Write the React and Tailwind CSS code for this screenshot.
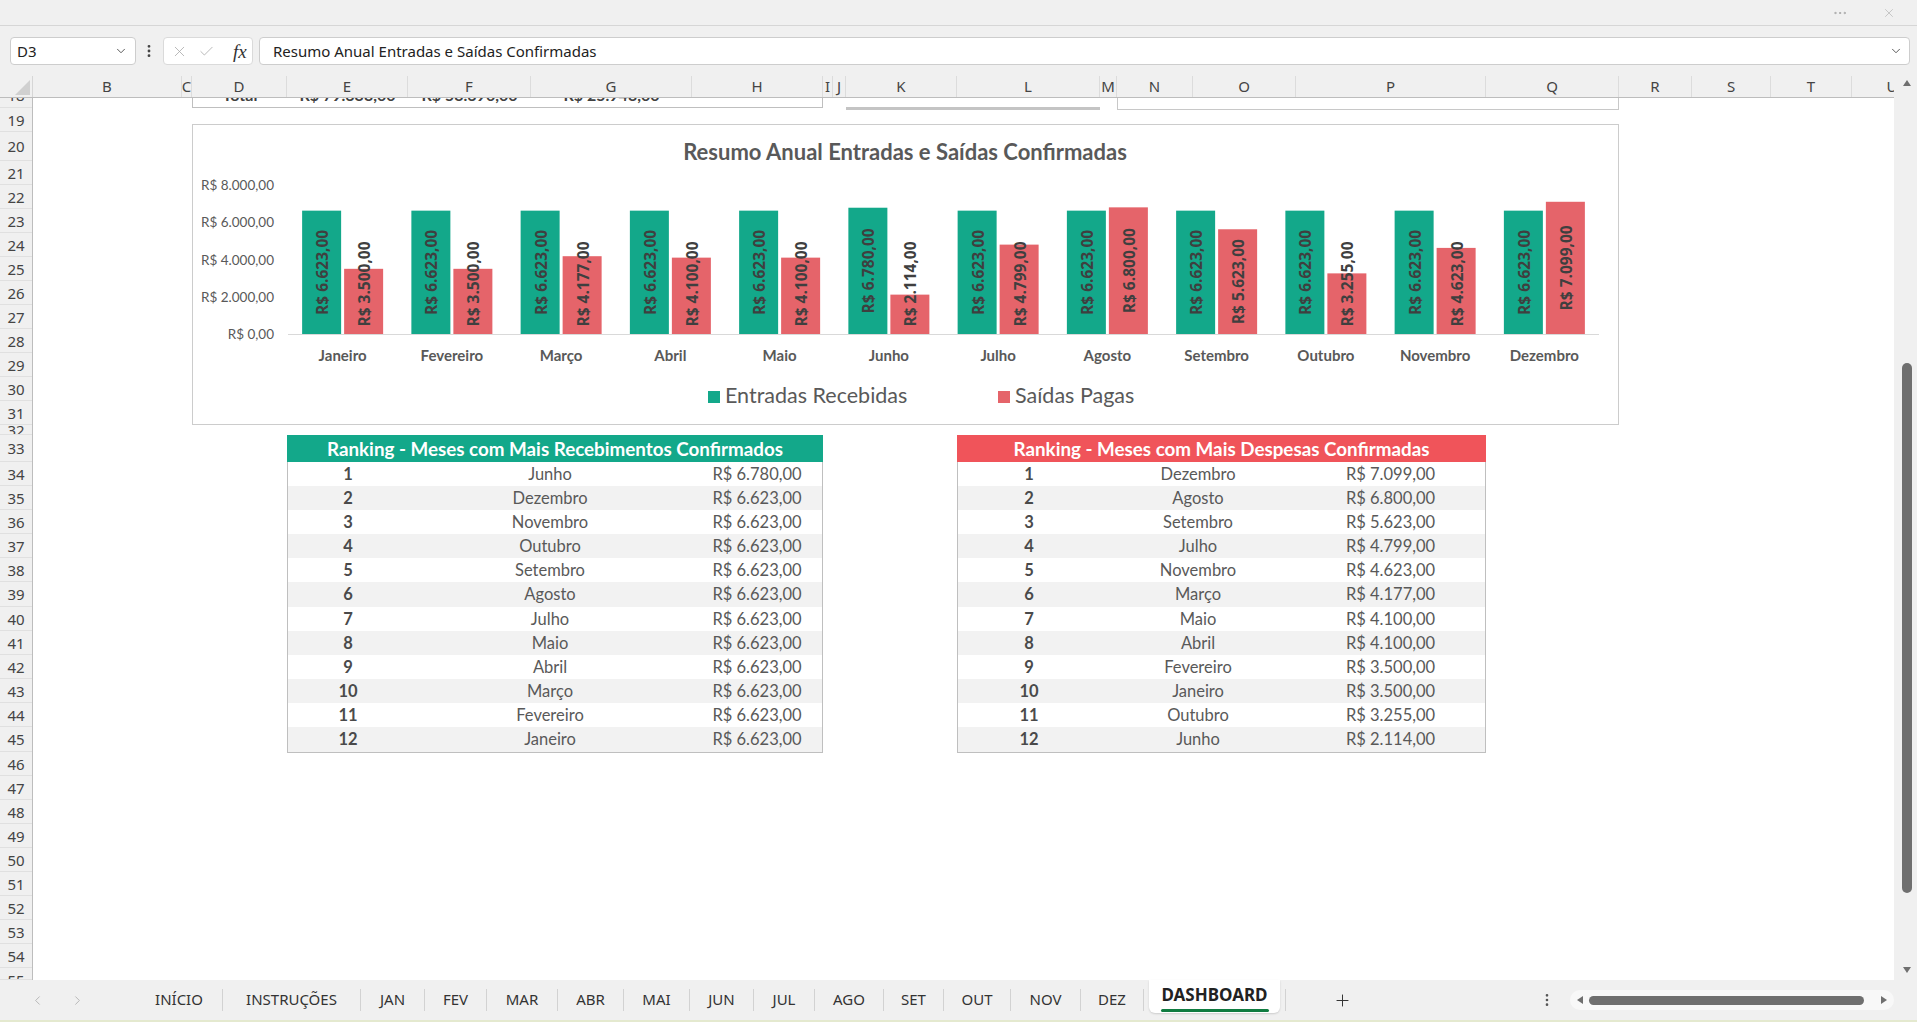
import React from "react";
import { ChevronDown, ChevronLeft, ChevronRight, EllipsisVertical, Ellipsis, X, Check, Plus } from "lucide-react";

const months = ["Janeiro", "Fevereiro", "Março", "Abril", "Maio", "Junho", "Julho", "Agosto", "Setembro", "Outubro", "Novembro", "Dezembro"];
const entradas = [6623, 6623, 6623, 6623, 6623, 6780, 6623, 6623, 6623, 6623, 6623, 6623];
const saidas = [3500, 3500, 4177, 4100, 4100, 2114, 4799, 6800, 5623, 3255, 4623, 7099];

const brl = (v) => "R$ " + String(v).replace(/\B(?=(\d{3})+(?!\d))/g, ".") + ",00";

const rankEntradas = [
    ["Junho", 6780], ["Dezembro", 6623], ["Novembro", 6623], ["Outubro", 6623],
    ["Setembro", 6623], ["Agosto", 6623], ["Julho", 6623], ["Maio", 6623],
    ["Abril", 6623], ["Março", 6623], ["Fevereiro", 6623], ["Janeiro", 6623],
];
const rankSaidas = [
    ["Dezembro", 7099], ["Agosto", 6800], ["Setembro", 5623], ["Julho", 4799],
    ["Novembro", 4623], ["Março", 4177], ["Maio", 4100], ["Abril", 4100],
    ["Fevereiro", 3500], ["Janeiro", 3500], ["Outubro", 3255], ["Junho", 2114],
];

const cols = [
    { l: "B", w: "w-[149px]" }, { l: "C", w: "w-[10px]" }, { l: "D", w: "w-[95px]" },
    { l: "E", w: "w-[121px]" }, { l: "F", w: "w-[123px]" }, { l: "G", w: "w-[161px]" },
    { l: "H", w: "w-[131px]" }, { l: "I", w: "w-[10px]" }, { l: "J", w: "w-[13px]" },
    { l: "K", w: "w-[111px]" }, { l: "L", w: "w-[143px]" }, { l: "M", w: "w-[17px]" },
    { l: "N", w: "w-[76px]" }, { l: "O", w: "w-[103px]" }, { l: "P", w: "w-[190px]" },
    { l: "Q", w: "w-[133px]" }, { l: "R", w: "w-[73px]" }, { l: "S", w: "w-[79px]" },
    { l: "T", w: "w-[81px]" }, { l: "U", w: "w-[81px]" },
];

// row number -> height class, and how a clipped label sits
const rowList = (() => {
    const out = [[18, "h-[10px]", "items-end"], [19, "h-[24px]"], [20, "h-[29px]"]];
    for (let n = 21; n <= 31; n++) out.push([n, "h-[24px]"]);
    out.push([32, "h-[10px]"]);
    out.push([33, "h-[27px]"]);
    for (let n = 34; n <= 45; n++) out.push([n, n === 39 || n === 45 ? "h-[25px]" : "h-[24px]"]);
    for (let n = 46; n <= 54; n++) out.push([n, "h-[24px]"]);
    out.push([55, "h-[12px]", "items-start"]);
    return out;
})();

const tableRowH = ["h-[24px]", "h-[24px]", "h-[24px]", "h-[24px]", "h-[24px]", "h-[25px]", "h-[24px]", "h-[24px]", "h-[24px]", "h-[24px]", "h-[24px]", "h-[25px]"];

const tabs = [
    ["INÍCIO", "w-[86px]"], ["INSTRUÇÕES", "w-[137px]"], ["JAN", "w-[63px]"], ["FEV", "w-[61px]"],
    ["MAR", "w-[70px]"], ["ABR", "w-[65px]"], ["MAI", "w-[65px]"], ["JUN", "w-[63px]"],
    ["JUL", "w-[60px]"], ["AGO", "w-[68px]"], ["SET", "w-[59px]"], ["OUT", "w-[66px]"],
    ["NOV", "w-[69px]"], ["DEZ", "w-[62px]"],
];

const TEAL = "#13a88a";
const RED = "#e5646a";

function Chart() {
    const k = 149 / 8000;
    const axisY = 209;
    const x0 = 95;
    const slot = 109.25;
    const font = "Lato, sans-serif";
    const labelFont = "'Open Sans', sans-serif";

    return (
        <svg width="1425" height="299" className="block" fontFamily={font}>
            <text x="712" y="34.5" textAnchor="middle" fontWeight="700" fontSize="22" fill="#595959">
                Resumo Anual Entradas e Saídas Confirmadas
            </text>

            {[0, 2000, 4000, 6000, 8000].map((v) => (
                <text key={v} x="81" y={axisY - v * k + 5} textAnchor="end" fontSize="13.5" fill="#595959">
                    {brl(v)}
                </text>
            ))}

            <line x1={x0} x2="1406" y1={axisY + 0.5} y2={axisY + 0.5} stroke="#d9d9d9" strokeWidth="1" />

            {months.map((m, i) => {
                const c = x0 + slot * (i + 0.5);
                const he = entradas[i] * k;
                const hs = saidas[i] * k;
                const ly = (h) => Math.min(axisY - h / 2, axisY - 50);
                const gx = c - 20.5;
                const rx = c + 21.5;
                return (
                    <g key={m}>
                        <rect x={c - 40.5} y={axisY - he} width="39" height={he} fill={TEAL} />
                        <rect x={c + 1.5} y={axisY - hs} width="39" height={hs} fill={RED} />
                        <text
                            x={gx}
                            y={ly(he)}
                            transform={`rotate(-90 ${gx} ${ly(he)})`}
                            textAnchor="middle"
                            dominantBaseline="central"
                            fontFamily={labelFont}
                            fontWeight="700"
                            fontSize="15.5"
                            fill="#3f3f3f"
                        >
                            {brl(entradas[i])}
                        </text>
                        <text
                            x={rx}
                            y={ly(hs)}
                            transform={`rotate(-90 ${rx} ${ly(hs)})`}
                            textAnchor="middle"
                            dominantBaseline="central"
                            fontFamily={labelFont}
                            fontWeight="700"
                            fontSize="15.5"
                            fill="#3f3f3f"
                        >
                            {brl(saidas[i])}
                        </text>
                        <text x={c} y="236" textAnchor="middle" fontWeight="700" fontSize="15" fill="#595959">
                            {m}
                        </text>
                    </g>
                );
            })}

            {/* legend */}
            <rect x="515" y="266" width="12" height="12" fill={TEAL} />
            <text x="532" y="278" fontSize="21.5" fill="#595959">Entradas Recebidas</text>
            <rect x="805" y="266" width="12" height="12" fill={RED} />
            <text x="822" y="278" fontSize="21.5" fill="#595959">Saídas Pagas</text>
        </svg>
    );
}

function RankTable({ title, bg, width, grid, rows }) {
    return (
        <div className={`${width} shrink-0`}>
            <div className={`h-[27px] ${bg} flex items-center justify-center text-white font-bold text-[18.8px] leading-none pt-[1px]`}>
                {title}
            </div>
            <div className="border-x border-b border-[#bfbfbf] text-[16.5px] text-[#595959]">
                {rows.map((r, i) => (
                    <div
                        key={i}
                        className={`grid ${grid} ${tableRowH[i]} items-center ${i % 2 ? "bg-[#f2f2f2]" : "bg-white"}`}
                    >
                        <div className="text-center font-bold text-[#4a4a4a]">{i + 1}</div>
                        <div className="text-center">{r[0]}</div>
                        <div className="text-center">{brl(r[1])}</div>
                    </div>
                ))}
            </div>
        </div>
    );
}

function TotalsCell({ w, children }) {
    return (
        <div className={`${w} h-[9px] shrink-0 overflow-hidden flex items-end justify-center`}>
            <div className="h-[24px] leading-[24px] shrink-0 font-bold text-[16px] text-[#404040] whitespace-nowrap">
                {children}
            </div>
        </div>
    );
}

function SheetBody() {
    return (
        <div className="flex-1 flex flex-col bg-white overflow-hidden font-['Lato',sans-serif]">
            {/* row 18: bottom edge of the totals block */}
            <div className="h-[10px] shrink-0 flex items-start">
                <div className="w-[159px] shrink-0" />
                <div className="w-[631px] h-[10px] shrink-0 flex border-x border-b border-[#bfbfbf]">
                    <TotalsCell w="w-[94px]">Total</TotalsCell>
                    <TotalsCell w="w-[121px]">R$ 79.633,00</TotalsCell>
                    <TotalsCell w="w-[123px]">R$ 53.690,00</TotalsCell>
                    <TotalsCell w="w-[161px]">R$ 25.943,00</TotalsCell>
                    <TotalsCell w="w-[130px]"></TotalsCell>
                </div>
                <div className="w-[23px] shrink-0" />
                <div className="w-[254px] h-[12px] shrink-0 border-b-[3px] border-[#c4c4c4]" />
                <div className="w-[17px] shrink-0" />
                <div className="w-[502px] h-[12px] shrink-0 border-x border-b border-[#c8c8c8]" />
            </div>

            {/* rows 19-31: chart */}
            <div className="h-[317px] shrink-0 pt-[16px] pl-[159px]">
                <div className="w-[1427px] h-[301px] border border-[#cccccc] bg-white">
                    <Chart />
                </div>
            </div>

            {/* row 32 */}
            <div className="h-[10px] shrink-0" />

            {/* rows 33-45: rankings */}
            <div className="h-[317px] shrink-0 flex items-start pl-[254px]">
                <RankTable
                    title="Ranking - Meses com Mais Recebimentos Confirmados"
                    bg="bg-[#13a88a]"
                    width="w-[536px]"
                    grid="grid-cols-[120px_284px_130px]"
                    rows={rankEntradas}
                />
                <div className="w-[134px] shrink-0" />
                <RankTable
                    title="Ranking - Meses com Mais Despesas Confirmadas"
                    bg="bg-[#f0545a]"
                    width="w-[529px]"
                    grid="grid-cols-[142px_196px_189px]"
                    rows={rankSaidas}
                />
            </div>
        </div>
    );
}

function RowHeaders() {
    return (
        <div className="w-[33px] shrink-0 flex flex-col overflow-hidden bg-[#f0f0f0] border-r border-[#bdbdbd] font-['Noto_Sans',sans-serif] text-[15px] text-[#444]">
            {rowList.map(([n, h, align]) => (
                <div
                    key={n}
                    className={`${h} shrink-0 overflow-hidden flex justify-center ${align || "items-center"} border-b border-[#e0e0e0]`}
                >
                    <div className="h-[24px] leading-[24px] shrink-0">{n}</div>
                </div>
            ))}
        </div>
    );
}

function ColumnHeaders() {
    return (
        <div className="h-[22px] shrink-0 flex bg-[#f0f0f0] border-b border-[#bdbdbd] font-['Noto_Sans',sans-serif] text-[15px] text-[#444]">
            <div className="w-[33px] shrink-0 border-r border-[#d6d6d6]">
                <svg width="33" height="21" className="block">
                    <polygon points="30,4 30,19 15,19" fill="#d0d0d0" />
                </svg>
            </div>
            {cols.map((c) => (
                <div
                    key={c.l}
                    className={`${c.w} shrink-0 overflow-hidden flex items-center justify-center border-r border-[#dcdcdc] leading-none`}
                >
                    {c.l}
                </div>
            ))}
        </div>
    );
}

function Triangle({ dir }) {
    const pts = {
        up: "0,7 4,1 8,7",
        down: "0,1 4,7 8,1",
        left: "7,0 1,4 7,8",
        right: "1,0 7,4 1,8",
    }[dir];
    return (
        <svg width="8" height="8" className="block shrink-0">
            <polygon points={pts} fill="#6f6f6f" />
        </svg>
    );
}

function TabBar() {
    return (
        <div className="h-[42px] shrink-0 flex flex-col bg-[#f0f0f0] font-['Noto_Sans',sans-serif]">
            <div className="h-[40px] flex items-center">
                <div className="w-[17px] shrink-0" />
                <div className="w-[40px] flex justify-center text-[#a8a8a8]">
                    <ChevronLeft size={15} strokeWidth={1.25} />
                </div>
                <div className="w-[40px] flex justify-center text-[#a8a8a8]">
                    <ChevronRight size={15} strokeWidth={1.25} />
                </div>
                <div className="w-[39px] shrink-0" />
                {tabs.map(([t, w]) => (
                    <React.Fragment key={t}>
                        <div className={`${w} shrink-0 text-center text-[15px] text-[#333] -mt-[2px]`}>{t}</div>
                        <div className="w-px h-[22px] bg-[#d2d2d2] shrink-0" />
                    </React.Fragment>
                ))}
                <div className="w-[5px] shrink-0" />
                <div className="w-[131px] h-[33px] self-start shrink-0 bg-white rounded-b-[6px] shadow-[0_1px_2px_rgba(0,0,0,0.15)] flex flex-col items-center">
                    <span className="mt-[3px] leading-[24px] text-[17px] font-bold text-[#222]">DASHBOARD</span>
                    <div className="w-[108px] h-[3px] rounded-full bg-[#107c41] mt-[2px]" />
                </div>
                <div className="w-[5px] shrink-0" />
                <div className="w-px h-[22px] bg-[#d2d2d2] shrink-0" />
                <div className="ml-[47px] text-[#333]">
                    <Plus size={19} strokeWidth={1.25} />
                </div>
                <div className="ml-[187px] text-[#555]">
                    <EllipsisVertical size={16} strokeWidth={2} />
                </div>
                <div className="ml-[15px] w-[324px] h-[20px] rounded-full bg-[#f8f8f8] flex items-center px-[6px] gap-[5px]">
                    <Triangle dir="left" />
                    <div className="w-[275px] h-[9px] rounded-full bg-[#6f6f6f]" />
                    <div className="flex-1" />
                    <Triangle dir="right" />
                </div>
            </div>
            <div className="h-[2px] bg-[#e4e9cf]" />
        </div>
    );
}

export default function App() {
    return (
        <div className="w-[1917px] h-[1022px] overflow-hidden flex flex-col bg-[#f0f0f0]">
            {/* window title strip */}
            <div className="h-[26px] shrink-0 flex items-center justify-end pr-[21px] border-b border-[#d6d6d6] text-[#a8a8a8]">
                <Ellipsis size={16} strokeWidth={1.5} />
                <div className="w-[34px]" />
                <X size={14} strokeWidth={1} />
            </div>

            {/* formula bar */}
            <div className="h-[50px] shrink-0 flex items-start pt-[11px] font-['Noto_Sans',sans-serif] text-[15px] text-[#222]">
                <div className="ml-[10px] w-[126px] h-[28px] bg-white border border-[#cdcdcd] rounded-[4px] flex items-center pl-[6px] pr-[7px]">
                    <span className="flex-1">D3</span>
                    <ChevronDown size={14} strokeWidth={1.5} className="text-[#444]" />
                </div>
                <div className="ml-[5px] h-[28px] flex items-center text-[#444]">
                    <EllipsisVertical size={16} strokeWidth={2.25} />
                </div>
                <div className="ml-[6px] w-[90px] h-[28px] bg-white border border-[#dadada] rounded-[4px] flex items-center pl-[7px] text-[#a6a6a6]">
                    <X size={17} strokeWidth={1.1} />
                    <Check size={17} strokeWidth={1.1} className="ml-[10px]" />
                    <span className="ml-[18px] font-['Liberation_Serif',serif] italic text-[19px] text-[#333] leading-none">fx</span>
                </div>
                <div className="ml-[6px] w-[1651px] h-[28px] bg-white border border-[#cdcdcd] rounded-[4px] flex items-center pl-[13px] pr-[6px]">
                    <span className="flex-1">Resumo Anual Entradas e Saídas Confirmadas</span>
                    <ChevronDown size={14} strokeWidth={1.5} className="text-[#444]" />
                </div>
            </div>

            {/* grid + vertical scrollbar */}
            <div className="h-[904px] shrink-0 flex">
                <div className="w-[1894px] shrink-0 flex flex-col">
                    <ColumnHeaders />
                    <div className="h-[882px] flex overflow-hidden">
                        <RowHeaders />
                        <SheetBody />
                    </div>
                </div>
                <div className="w-[23px] shrink-0 bg-[#f0f0f0] flex flex-col items-center pl-[2px]">
                    <div className="mt-[3px]">
                        <Triangle dir="up" />
                    </div>
                    <div className="mt-[276px] w-[10px] h-[530px] rounded-full bg-[#6f6f6f]" />
                    <div className="mt-auto mb-[6px]">
                        <Triangle dir="down" />
                    </div>
                </div>
            </div>

            <TabBar />
        </div>
    );
}
